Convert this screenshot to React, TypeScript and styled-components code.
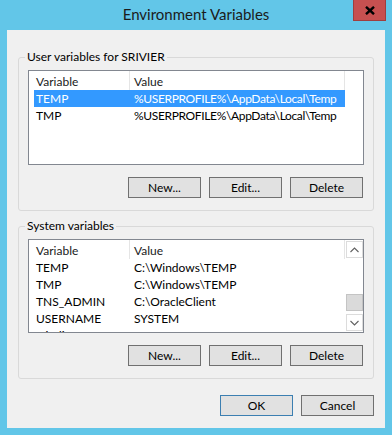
import React from 'react';
import styled, { createGlobalStyle } from 'styled-components';

const FONT = `"Segoe UI", Lato, "Noto Sans", "Liberation Sans", sans-serif`;

const Global = createGlobalStyle`
  html, body { margin: 0; padding: 0; }
  body { background: #62c6e8; font-family: ${FONT}; font-size: 12px; color: #000; }
  * { box-sizing: border-box; }
`;

const Window = styled.div`
  width: 392px;
  height: 435px;
  display: flex;
  flex-direction: column;
  background: #62c6e8;
  overflow: hidden;
`;

const TitleBar = styled.div`
  height: 30px;
  flex-shrink: 0;
  display: grid;
  grid-template-columns: 1fr auto 1fr;
`;

const Title = styled.div`
  grid-column: 2;
  font-size: 15px;
  line-height: 29px;
  color: #1b1b1b;
  white-space: nowrap;
`;

const CloseButton = styled.div`
  grid-column: 3;
  justify-self: end;
  align-self: start;
  margin-right: 6px;
  width: 33px;
  height: 21px;
  background: #c75050;
  border: 1px solid #a03e3e;
  border-top: none;
  display: flex;
  align-items: center;
  justify-content: center;
`;

const Client = styled.div`
  flex: 1;
  margin: 0 7px 7px;
  background: #f0f0f0;
  padding: 19px 11px 12px;
  display: flex;
  flex-direction: column;
  gap: 7px;
`;

const Group = styled.fieldset`
  margin: 0;
  min-width: 0;
  padding: 5px 9px 12px;
  border: 1px solid #d9d9d9;
  border-radius: 3px;
  display: flex;
  flex-direction: column;
  gap: 12px;
`;

const Legend = styled.legend`
  margin-left: -3px;
  padding: 0 2px;
  font-size: 12px;
  line-height: 16px;
  color: #000;
`;

const ListView = styled.div<{ $h: number }>`
  height: ${(p) => p.$h}px;
  border: 1px solid #828790;
  background: #fff;
  display: flex;
  overflow: hidden;
`;

const ListBody = styled.div`
  flex: 1;
  min-width: 0;
  display: flex;
  flex-direction: column;
  overflow: hidden;
`;

const Header = styled.div`
  display: flex;
  height: 19px;
  flex-shrink: 0;
`;

const HeaderCell = styled.div<{ $w: number; $pl: number }>`
  width: ${(p) => p.$w}px;
  padding-left: ${(p) => p.$pl}px;
  padding-top: 2px;
  line-height: 17px;
  border-right: 1px solid #e5e5e5;
  color: #1a1a1a;
  white-space: nowrap;
  overflow: hidden;
`;

const Row = styled.div<{ $sel?: boolean }>`
  display: flex;
  flex-shrink: 0;
  height: 17px;
  width: 311px;
  margin-left: 5px;
  line-height: 17px;
  background: ${(p) => (p.$sel ? '#3399ff' : 'transparent')};
  color: ${(p) => (p.$sel ? '#fff' : '#000')};
  white-space: nowrap;
`;

const NameCell = styled.div`
  width: 95px;
  padding-left: 2px;
  overflow: hidden;
`;

const ValueCell = styled.div<{ $condensed?: boolean }>`
  flex: 1;
  padding-left: 5px;
  overflow: hidden;
  letter-spacing: ${(p) => (p.$condensed ? '-0.35px' : '0')};
`;

const ScrollBar = styled.div`
  width: 17px;
  flex-shrink: 0;
  padding: 1px 0;
  display: flex;
  flex-direction: column;
  background: #fff;
`;

const ArrowBox = styled.div`
  height: 17px;
  flex-shrink: 0;
  border: 1px solid #dcdcdc;
  display: flex;
  align-items: center;
  justify-content: center;
`;

const Track = styled.div`
  flex: 1;
  display: flex;
  flex-direction: column;
`;

const Thumb = styled.div`
  height: 17px;
  flex-shrink: 0;
  background: #dadada;
  border: 1px solid #c4c4c4;
`;

const ButtonRow = styled.div`
  display: flex;
  justify-content: flex-end;
  gap: 8px;
  padding-right: 1px;
`;

const Footer = styled.div`
  display: flex;
  justify-content: flex-end;
  gap: 8px;
  margin-top: auto;
`;

const Button = styled.button<{ $default?: boolean }>`
  width: 73px;
  height: 21px;
  padding: 0;
  margin: 0;
  background: #e1e1e1;
  border: 1px solid ${(p) => (p.$default ? '#3c7fb1' : '#707070')};
  font-family: ${FONT};
  font-size: 12px;
  color: #000;
  line-height: 19px;
`;

type Item = { name: string; value: string; sel?: boolean };

const userVars: Item[] = [
  { name: 'TEMP', value: '%USERPROFILE%\\AppData\\Local\\Temp', sel: true },
  { name: 'TMP', value: '%USERPROFILE%\\AppData\\Local\\Temp' },
];

const sysVars: Item[] = [
  { name: 'TEMP', value: 'C:\\Windows\\TEMP' },
  { name: 'TMP', value: 'C:\\Windows\\TEMP' },
  { name: 'TNS_ADMIN', value: 'C:\\OracleClient' },
  { name: 'USERNAME', value: 'SYSTEM' },
  { name: 'windir', value: '%SystemRoot%' },
];

const Chevron = ({ up }: { up?: boolean }) => (
  <svg width="9" height="6" viewBox="0 0 9 6">
    <polyline
      points={up ? '0.5,5 4.5,1 8.5,5' : '0.5,1 4.5,5 8.5,1'}
      fill="none"
      stroke="#606060"
      strokeWidth="1.1"
    />
  </svg>
);

const List = ({
  items,
  h,
  scroll,
  condensed,
}: {
  items: Item[];
  h: number;
  scroll?: number;
  condensed?: boolean;
}) => {
  const trackH = h - 2 - 2 - 34;
  const thumbTop = scroll !== undefined ? Math.round((trackH - 17) * scroll) : 0;
  return (
    <ListView $h={h}>
      <ListBody>
        <Header>
          <HeaderCell $w={101} $pl={7}>Variable</HeaderCell>
          <HeaderCell $w={215} $pl={4}>Value</HeaderCell>
        </Header>
        {items.map((it, i) => (
          <Row key={i} $sel={it.sel}>
            <NameCell>{it.name}</NameCell>
            <ValueCell $condensed={condensed}>{it.value}</ValueCell>
          </Row>
        ))}
      </ListBody>
      {scroll !== undefined && (
        <ScrollBar>
          <ArrowBox>
            <Chevron up />
          </ArrowBox>
          <Track>
            <Thumb style={{ marginTop: thumbTop }} />
          </Track>
          <ArrowBox>
            <Chevron />
          </ArrowBox>
        </ScrollBar>
      )}
    </ListView>
  );
};

export default function App() {
  return (
    <>
      <Global />
      <Window>
        <TitleBar>
          <Title>Environment Variables</Title>
          <CloseButton>
            <svg width="10" height="9" viewBox="0 0 10 9">
              <path d="M1 0.8 L9 8.2 M9 0.8 L1 8.2" stroke="#000" strokeWidth="2.4" fill="none" />
            </svg>
          </CloseButton>
        </TitleBar>
        <Client>
          <Group>
            <Legend>User variables for SRIVIER</Legend>
            <List items={userVars} h={95} condensed />
            <ButtonRow>
              <Button>New...</Button>
              <Button>Edit...</Button>
              <Button>Delete</Button>
            </ButtonRow>
          </Group>
          <Group>
            <Legend>System variables</Legend>
            <List items={sysVars} h={94} scroll={0.92} />
            <ButtonRow>
              <Button>New...</Button>
              <Button>Edit...</Button>
              <Button>Delete</Button>
            </ButtonRow>
          </Group>
          <Footer>
            <Button $default>OK</Button>
            <Button>Cancel</Button>
          </Footer>
        </Client>
      </Window>
    </>
  );
}
